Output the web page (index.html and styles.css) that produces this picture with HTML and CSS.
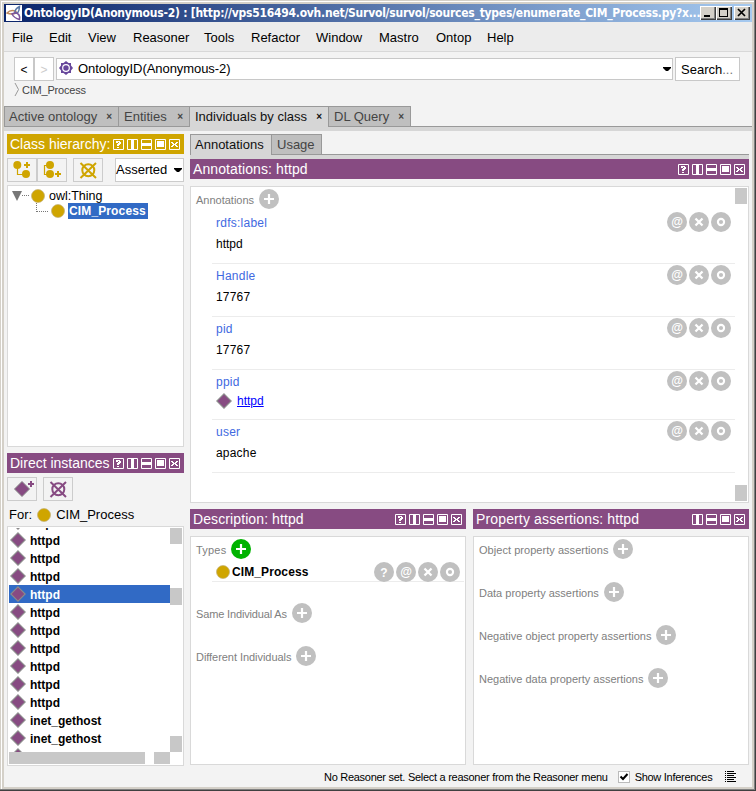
FILE: index.html
```html
<!DOCTYPE html>
<html lang="en">
<head>
<meta charset="utf-8">
<title>OntologyID(Anonymous-2)</title>
<link rel="stylesheet" href="styles.css">
</head>
<body>
<svg class="defs" width="0" height="0" aria-hidden="true">
  <symbol id="w-help" viewBox="0 0 11 11"><path d="M.5.5h10v10H.5z" fill="none" stroke="#fff"/><path d="M3 2h4v1h1v2H7v1H6v1H4V5h1V4h1V3H5v1H3zM4 8h2v1H4z" fill="#fff"/></symbol>
  <symbol id="w-cols" viewBox="0 0 11 11"><path d="M.5.5h10v10H.5z" fill="none" stroke="#fff"/><path d="M4 1h3v9H4z" fill="#fff"/></symbol>
  <symbol id="w-rows" viewBox="0 0 11 11"><path d="M.5.5h10v10H.5z" fill="none" stroke="#fff"/><path d="M1 4h9v3H1z" fill="#fff"/></symbol>
  <symbol id="w-max" viewBox="0 0 11 11"><path d="M.5.5h10v10H.5z" fill="none" stroke="#fff"/><path d="M2 2h7v6H2z" fill="#fff"/></symbol>
  <symbol id="w-close" viewBox="0 0 11 11"><path d="M.5.5h10v10H.5z" fill="none" stroke="#fff"/><path d="M2 3h2v1h1v1h1V4h1V3h2v1H8v1H7v1h1v1h1v1H7V7H6V6H5v1H4v1H2V7h1V6h1V5H3V4H2z" fill="#fff"/></symbol>
  <symbol id="c-add" viewBox="0 0 20 20"><circle cx="10" cy="10" r="10"/><path d="M10 5v10M5 10h10" stroke="#fff" stroke-width="2.2"/></symbol>
  <symbol id="c-x" viewBox="0 0 20 20"><circle cx="10" cy="10" r="10"/><path d="M6.5 6.5l7 7M13.5 6.5l-7 7" stroke="#fff" stroke-width="2.3"/></symbol>
  <symbol id="c-o" viewBox="0 0 20 20"><circle cx="10" cy="10" r="10"/><circle cx="10" cy="10" r="3.1" fill="none" stroke="#fff" stroke-width="2.1"/></symbol>
  <symbol id="diamond" viewBox="0 0 16 16"><path d="M8 .8L15.2 8 8 15.2.8 8z" fill="#874b82" stroke="#8b8b8b" stroke-width="1.1"/></symbol>
  <symbol id="ball" viewBox="0 0 14 14"><circle cx="7" cy="7" r="6.5" fill="#cfa500" stroke="#c3b077" stroke-width=".7"/></symbol>
</svg>

<div class="window">
  <div class="titlebar">
    <svg class="app-icon" viewBox="0 0 16 16"><path fill="#fff" d="M0 0h16v16H0z"/><g fill="none" stroke-width="1.5"><path d="M1 8Q5 4 10 6.500Q10 9 6 9Q3 9 1 8z" stroke="#c08a5c"/><path d="M13.500 1.500Q8.500 4 9 8Q13 9.500 13.500 1.500z" stroke="#5a78a6"/><path d="M6 9Q8 13 13.500 14.500Q14.500 9 9.500 7.500z" stroke="#7d559c"/></g></svg>
    <span class="title">OntologyID(Anonymous-2) : [http://vps516494.ovh.net/Survol/survol/sources_types/enumerate_CIM_Process.py?x...</span>
    <span class="wb"><svg viewBox="0 0 16 14"><path d="M4 9h6v2H4z"/></svg></span><span class="wb"><svg viewBox="0 0 16 14"><path d="M3 2h9v9H3zM4 4v6h7V4z" fill-rule="evenodd"/></svg></span><span class="wb last"><svg viewBox="0 0 16 14"><path d="M4 3l7 7M11 3l-7 7" stroke="#000" stroke-width="1.7"/></svg></span>
  </div>

  <div class="menubar">
    <span class="m1">File</span><span class="m2">Edit</span><span class="m3">View</span><span class="m4">Reasoner</span><span class="m5">Tools</span><span class="m6">Refactor</span><span class="m7">Window</span><span class="m8">Mastro</span><span class="m9">Ontop</span><span class="m10">Help</span>
  </div>

  <div class="navbar">
    <span class="nav">&lt;</span><span class="nav off">&gt;</span>
    <div class="address">
      <svg width="14" height="14" viewBox="0 0 14 14"><path d="M7 0l2.500 2H12v2.500L14 7l-2 2.500V12H9.500L7 14l-2.500-2H2V9.500L0 7l2-2.500V2h2.500z" fill="#67479b"/><circle cx="7" cy="7" r="3.300" fill="none" stroke="#fff" stroke-width="1.200"/></svg>
      <span class="grow">OntologyID(Anonymous-2)</span>
      <svg width="8" height="4" viewBox="0 0 8 4"><path d="M0 0h8v1L5 4H3L0 1z"/></svg>
    </div>
    <span class="search">Search<i>...</i></span>
  </div>
  <div class="crumb"><svg width="6" height="15" viewBox="0 0 6 15"><path d="M1 1l3.5 6.5L1 14" fill="none" stroke="#999"/></svg><span>CIM_Process</span></div>

  <div class="tabs">
    <div class="tab t1"><span>Active ontology</span><b>×</b></div><div class="tab t2"><span>Entities</span><b>×</b></div><div class="tab t3 on"><span>Individuals by class</span><b>×</b></div><div class="tab t4"><span>DL Query</span><b>×</b></div><div class="tabfill"></div>
  </div>
  <div class="strip"></div>

  <div class="work">
    <div class="left">
      <div class="head gold"><span class="h-class">Class hierarchy:</span><div class="wi"><svg><use href="#w-help"/></svg><svg><use href="#w-cols"/></svg><svg><use href="#w-rows"/></svg><svg><use href="#w-max"/></svg><svg><use href="#w-close"/></svg></div></div>
      <div class="tools">
        <span class="tool"><svg viewBox="0 0 28 22"><path d="M9.500 6v9.500h9" fill="none" stroke="#cfa500" stroke-width="1.2"/><circle cx="9.300" cy="6" r="4" fill="#cfa500"/><circle cx="18" cy="15" r="4" fill="#cfa500"/><path d="M19 3v6M16 6h6" stroke="#cfa500" stroke-width="2"/></svg></span>
        <span class="tool"><svg viewBox="0 0 28 22"><path d="M12 6.500H6.500v9h6" fill="none" stroke="#cfa500" stroke-width="1.2"/><circle cx="12" cy="6" r="4" fill="#cfa500"/><circle cx="12" cy="15" r="4" fill="#cfa500"/><path d="M20 12v6M17 15h6" stroke="#cfa500" stroke-width="2"/></svg></span>
        <span class="tool gap"><svg viewBox="0 0 28 22"><g fill="none" stroke="#cfa500" stroke-width="2"><circle cx="14.300" cy="11.300" r="6"/><path d="M6.500 4l15.500 15M22 4L6.500 19"/></g></svg></span>
        <span class="select">Asserted<svg width="8" height="4" viewBox="0 0 8 4"><path d="M0 0h8v1L5 4H3L0 1z"/></svg></span>
      </div>
      <div class="box tree">
        <div class="node"><svg class="arrow" width="20" height="10" viewBox="0 0 20 10"><path d="M0 0h10L5 10z" fill="#777"/><path d="M10 4.5h8" stroke="#777" stroke-dasharray="1 1"/></svg><svg class="ball"><use href="#ball"/></svg><span class="owl">owl:Thing</span></div>
        <div class="node child"><svg class="elbow" width="13" height="10" viewBox="0 0 13 10"><path d="M.5 0v9M1 8.5h12" fill="none" stroke="#777" stroke-dasharray="1 1"/></svg><svg class="ball"><use href="#ball"/></svg><b class="chosen">CIM_Process</b></div>
      </div>
      <div class="head second"><span class="h-direct">Direct instances</span><div class="wi"><svg><use href="#w-help"/></svg><svg><use href="#w-cols"/></svg><svg><use href="#w-rows"/></svg><svg><use href="#w-max"/></svg><svg><use href="#w-close"/></svg></div></div>
      <div class="tools">
        <span class="tool"><svg viewBox="0 0 28 22"><path d="M14 3.500l7.500 7.500-7.500 7.500L6.500 11z" fill="#874b82" stroke="#888"/><path d="M23 3v6M20 6h6" stroke="#874b82" stroke-width="2"/></svg></span>
        <span class="tool gap"><svg viewBox="0 0 28 22"><g fill="none" stroke="#874b82" stroke-width="2"><circle cx="14.300" cy="11.300" r="6"/><path d="M6.500 4l15.500 15M22 4L6.500 19"/></g></svg></span>
      </div>
      <div class="for"><span>For:</span><svg class="ball"><use href="#ball"/></svg><span class="forname">CIM_Process</span></div>
      <div class="box list">
        <div class="listmain">
          <div class="rows">
            <div><svg><use href="#diamond"/></svg>httpd</div>
            <div><svg><use href="#diamond"/></svg>httpd</div>
            <div><svg><use href="#diamond"/></svg>httpd</div>
            <div><svg><use href="#diamond"/></svg>httpd</div>
            <div class="sel"><svg><use href="#diamond"/></svg>httpd</div>
            <div><svg><use href="#diamond"/></svg>httpd</div>
            <div><svg><use href="#diamond"/></svg>httpd</div>
            <div><svg><use href="#diamond"/></svg>httpd</div>
            <div><svg><use href="#diamond"/></svg>httpd</div>
            <div><svg><use href="#diamond"/></svg>httpd</div>
            <div><svg><use href="#diamond"/></svg>httpd</div>
            <div class="inet"><svg><use href="#diamond"/></svg>inet_gethost</div>
            <div class="inet"><svg><use href="#diamond"/></svg>inet_gethost</div>
            <div><svg><use href="#diamond"/></svg></div>
          </div>
          <div class="vbar"><i></i><i class="thumb"></i><i></i></div>
        </div>
        <div class="hbar"><i class="hthumb"></i><i></i></div>
      </div>
    </div>

    <div class="right">
      <div class="subtabs"><div class="tab s1 on"><span>Annotations</span></div><div class="tab s2"><span>Usage</span></div><div class="tabfill"></div></div>
      <div class="substrip"></div>
      <div class="head"><span class="h-ann">Annotations: httpd</span><div class="wi"><svg><use href="#w-help"/></svg><svg><use href="#w-cols"/></svg><svg><use href="#w-rows"/></svg><svg><use href="#w-max"/></svg><svg><use href="#w-close"/></svg></div></div>
      <div class="box ann">
        <div class="annmain">
          <div class="sec"><span class="l-ann">Annotations</span><svg class="c"><use href="#c-add"/></svg></div>
          <div class="row"><div><p class="key">rdfs:label</p><p>httpd</p></div><div class="acts"><span class="at">@</span><svg class="c"><use href="#c-x"/></svg><svg class="c"><use href="#c-o"/></svg></div></div>
          <div class="row"><div><p class="key">Handle</p><p class="num">17767</p></div><div class="acts"><span class="at">@</span><svg class="c"><use href="#c-x"/></svg><svg class="c"><use href="#c-o"/></svg></div></div>
          <div class="row"><div><p class="key">pid</p><p class="num">17767</p></div><div class="acts"><span class="at">@</span><svg class="c"><use href="#c-x"/></svg><svg class="c"><use href="#c-o"/></svg></div></div>
          <div class="row short"><div><p class="key">ppid</p><p class="ref"><svg><use href="#diamond"/></svg><a>httpd</a></p></div><div class="acts"><span class="at">@</span><svg class="c"><use href="#c-x"/></svg><svg class="c"><use href="#c-o"/></svg></div></div>
          <div class="row"><div><p class="key">user</p><p class="num">apache</p></div><div class="acts"><span class="at">@</span><svg class="c"><use href="#c-x"/></svg><svg class="c"><use href="#c-o"/></svg></div></div>
        </div>
        <div class="vbar"><i></i><i></i></div>
      </div>
      <div class="pair">
        <div class="half">
          <div class="head"><span class="h-desc">Description: httpd</span><div class="wi"><svg><use href="#w-help"/></svg><svg><use href="#w-cols"/></svg><svg><use href="#w-rows"/></svg><svg><use href="#w-max"/></svg><svg><use href="#w-close"/></svg></div></div>
          <div class="box lower">
            <div class="sec"><span class="l-types">Types</span><svg class="c green"><use href="#c-add"/></svg></div>
            <div class="type"><svg class="ball"><use href="#ball"/></svg><b>CIM_Process</b><div class="acts"><span class="at q">?</span><span class="at">@</span><svg class="c"><use href="#c-x"/></svg><svg class="c"><use href="#c-o"/></svg></div></div>
            <div class="sec same"><span class="l-same">Same Individual As</span><svg class="c"><use href="#c-add"/></svg></div>
            <div class="sec"><span class="l-diff">Different Individuals</span><svg class="c"><use href="#c-add"/></svg></div>
          </div>
        </div>
        <div class="half">
          <div class="head"><span class="h-prop">Property assertions: httpd</span><div class="wi"><svg><use href="#w-cols"/></svg><svg><use href="#w-rows"/></svg><svg><use href="#w-max"/></svg><svg><use href="#w-close"/></svg></div></div>
          <div class="box lower">
            <div class="sec"><span class="p1">Object property assertions</span><svg class="c"><use href="#c-add"/></svg></div>
            <div class="sec"><span class="p2">Data property assertions</span><svg class="c"><use href="#c-add"/></svg></div>
            <div class="sec"><span class="p3">Negative object property assertions</span><svg class="c"><use href="#c-add"/></svg></div>
            <div class="sec"><span class="p4">Negative data property assertions</span><svg class="c"><use href="#c-add"/></svg></div>
          </div>
        </div>
      </div>
    </div>
  </div>

  <div class="status">
    <span class="st1">No Reasoner set. Select a reasoner from the Reasoner menu</span>
    <span class="check"><svg viewBox="0 0 10 10"><path d="M1.5 4.5L4 7l4.5-5" fill="none" stroke="#000" stroke-width="2"/></svg></span>
    <span class="st2">Show Inferences</span>
    <svg class="log" width="11" height="12" viewBox="0 0 11 12"><path d="M0 .5h1M2 .5h7M0 2.5h1M2 2.5h9M0 4.5h1M2 4.5h7M0 6.5h1M2 6.5h9M0 8.5h1M2 8.5h7M0 10.5h1M2 10.5h9" stroke="#000"/></svg>
  </div>
</div>
</body>
</html>
```
FILE: styles.css
```css
* { box-sizing: border-box; }
body { margin: 0; font: 13px/16px "Liberation Sans", Arial, sans-serif; color: #000; }
p { margin: 0; }
svg { display: block; flex: none; }
span, b, a { white-space: nowrap; }
.defs { position: absolute; }

.window {
  width: 756px; height: 791px; overflow: hidden; padding: 4px;
  display: flex; flex-direction: column;
  background: linear-gradient(#f3f3f3, #f3f3f3) content-box,
    linear-gradient(#404040, #404040) right / 1px 100% no-repeat,
    linear-gradient(#404040, #404040) bottom / 100% 1px no-repeat,
    linear-gradient(#808080, #808080) 754px 0 / 1px 790px no-repeat,
    linear-gradient(#808080, #808080) 0 789px / 755px 1px no-repeat,
    linear-gradient(#fff, #fff) 1px 1px / 753px 1px no-repeat,
    linear-gradient(#fff, #fff) 1px 1px / 1px 788px no-repeat,
    #d4d0c8;
  background-origin: content-box, border-box, border-box, border-box, border-box, border-box, border-box, border-box;
}

.titlebar { height: 18px; flex: none; display: flex; align-items: center; background: linear-gradient(90deg, #0a246a, #a6caf0); padding: 0 2px; }
.app-icon { width: 16px; height: 16px; margin-right: 2px; }
.title { width: 676px; flex: none; font: bold 12px/16px "DejaVu Sans Condensed", "DejaVu Sans", sans-serif; letter-spacing: -.24px; color: #fff; }
.wb { width: 16px; height: 14px; flex: none; background: #d4d0c8; box-shadow: inset 1px 1px #fff, inset -1px -1px #404040, inset -2px -2px #808080; }
.wb svg { width: 16px; height: 14px; }
.wb.last { margin-left: 2px; }

.menubar { height: 30px; flex: none; background: #ececec; border-bottom: 1px solid #d8d8d8; display: flex; align-items: center; padding: 2px 0 0 8px; }
.menubar span { flex: none; }
.m1 { width: 37px; } .m2 { width: 39px; } .m3 { width: 45px; } .m4 { width: 71px; } .m5 { width: 47px; } .m6 { width: 65px; } .m7 { width: 63px; } .m8 { width: 57px; } .m9 { width: 51px; }

.navbar { height: 29px; flex: none; margin-top: 5px; padding-left: 10px; display: flex; align-items: flex-start; }
.nav { width: 20px; height: 24px; border: 1px solid #c8c8c8; background: #fff; text-align: center; line-height: 24px; font-size: 12px; }
.nav.off { color: #ccc; }
.address { width: 617px; height: 22px; margin: 1px 2px 0; border: 1px solid #c8c8c8; background: #fff; display: flex; align-items: center; padding: 0 1px 0 2px; }
.address svg:first-child { margin: -2px 5px 0 0; }
.grow { flex: 1; letter-spacing: -.06px; }
.search { width: 65px; height: 24px; border: 1px solid #c8c8c8; background: #fff; line-height: 24px; padding-left: 5px; }
.search i { font-style: normal; color: #777; }
.crumb { height: 24px; flex: none; display: flex; padding-left: 10px; font-size: 11px; color: #444; line-height: 15px; margin-top: -4px; }
.crumb span { margin-left: 2px; line-height: 16px; letter-spacing: -.2px; }

.tabs { height: 21px; flex: none; display: flex; }
.tab { height: 21px; border: 1px solid #999; border-right-width: 0; background: #bfbfbf; display: flex; align-items: center; justify-content: space-between; color: #444; padding: 0 6px 0 4px; }
.tab b { font-size: 10px; }
.tab.on { background: #d6d6d6; border-bottom: 0; color: #111; }
.t1 { width: 114px; } .t2 { width: 71px; padding-left: 5px; } .t3 { width: 139px; padding-left: 5px; } .t4 { width: 83px; border-right-width: 1px; padding-left: 5px; }
.tabfill { flex: 1; border-bottom: 1px solid #999; }
.strip { height: 4px; flex: none; background: #d6d6d6; }

.work { display: flex; gap: 6px; padding: 3px 3px 0; flex: none; height: 635px; }
.left { width: 177px; }
.right { width: 559px; }
.head { height: 20px; background: #874b82; color: #fff; font-size: 14px; line-height: 20px; display: flex; justify-content: space-between; padding: 0 4px 0 3px; }
.head.gold { background: #cfa500; }
.head.second { margin-top: 6px; }
.h-ann, .h-desc { letter-spacing: .1px; }
.h-prop { letter-spacing: .14px; }
.wi { display: flex; gap: 3px; padding-top: 5px; flex: none; }
.wi svg { width: 11px; height: 11px; }
.tools { display: flex; height: 24px; margin-top: 4px; }
.tool { width: 30px; height: 24px; border: 1px solid #ccc; }
.tool svg { width: 28px; height: 22px; }
.tool.gap { margin-left: 6px; }
.select { margin-left: auto; width: 69px; border: 1px solid #ccc; background: #fff; display: flex; align-items: center; justify-content: space-between; padding-right: 1px; }
.box { border: 1px solid #d9d9d9; background: #fff; }
.tree { height: 262px; margin-top: 3px; padding-top: 2px; }
.node { display: flex; align-items: center; height: 16px; }
.node .arrow { margin: 0 0 0 4px; }
.ball { width: 14px; height: 14px; }
.node .ball { margin-right: 4px; margin-left: -1px; }
.owl { font-size: 12.5px; }
.child { margin-top: -1px; }
.child .elbow { margin: -6px 3px 0 28px; }
.child .ball { margin-right: 3px; }
.chosen { background: #316ac5; color: #fff; width: 80px; padding-left: 1px; font-size: 12px; letter-spacing: .13px; }
.for { height: 25px; display: flex; align-items: center; padding: 3px 0 0 2px; }
.for .ball { margin: 0 5px; }
.list { height: 240px; padding: 1px; }
.listmain { display: flex; height: 224px; overflow: hidden; }
.rows { width: 161px; margin-top: -15px; font-weight: bold; font-size: 12px; }
.rows div { height: 18px; display: flex; align-items: center; padding: 2px 0 0 1px; line-height: 16px; }
.rows svg { width: 16px; height: 16px; margin: -2px 4px 0 0; }
.rows .sel { background: #316ac5; color: #fff; }
.vbar { width: 12px; display: flex; flex-direction: column; justify-content: space-between; }
.vbar i { height: 16px; background: #c8c8c8; }
.vbar i.thumb { height: 17px; margin-bottom: 87px; }
.hbar { display: flex; height: 12px; width: 161px; justify-content: space-between; }
.hbar i { width: 16px; background: #c8c8c8; }
.hbar .hthumb { width: 136px; }

.subtabs { display: flex; height: 21px; }
.s1 { width: 81px; } .s2 { width: 51px; border-right-width: 1px; padding-left: 5px; }
.substrip { height: 4px; background: #d6d6d6; }
.ann { height: 317px; margin-top: 7px; padding: 1px; display: flex; }
.annmain { width: 544px; }
.sec { height: 43px; display: flex; align-items: flex-start; font-size: 11px; color: #808080; padding: 2px 0 0 5px; }
.sec span { line-height: 23px; flex: none; }
.annmain .sec { height: 23px; padding: 1px 0 0 4px; }
.l-types { letter-spacing: .2px; }
.l-same { letter-spacing: -.15px; }
.l-diff { letter-spacing: -.05px; }
.p1 { letter-spacing: .04px; }
.c { width: 20px; height: 20px; fill: #c0c0c0; }
.c.green { fill: #00b300; }
.sec .c { margin-left: 5px; }
.row { height: 53px; margin-left: 20px; padding-left: 4px; border-bottom: 1px solid #ececec; display: flex; justify-content: space-between; font-size: 12px; }
.row.short { height: 50px; }
.row p { height: 21px; line-height: 22px; }
.row p.key { color: #4169e1; height: 22px; padding-top: 1px; letter-spacing: .25px; }
.row .num { letter-spacing: .2px; }
.row .ref { display: flex; align-items: center; height: 17px; }
.ref svg { width: 16px; height: 16px; margin-right: 5px; }
.ref a { color: #00f; text-decoration: underline; line-height: 18px; padding-top: 1px; }
.acts { display: flex; gap: 2px; padding: 1px 4px 0 0; }
.at { width: 20px; height: 20px; border-radius: 50%; background: #c0c0c0; color: #fff; font: bold 12px/20px "Liberation Sans", sans-serif; text-align: center; }
.at.q { line-height: 22px; }
.pair { display: flex; gap: 7px; margin-top: 6px; }
.half { width: 276px; }
.lower { height: 229px; margin-top: 7px; }
.lower > .sec:first-child + .type { margin-top: -18px; }
.type { height: 20px; margin-left: 21px; padding-left: 4px; border-bottom: 1px solid #ececec; display: flex; align-items: center; font-size: 12px; margin-right: 1px; }
.type b { margin-left: 2px; flex: 1; letter-spacing: .1px; }
.same { margin-top: 19px; }

.status { flex: none; height: 22px; display: flex; align-items: center; font-size: 11px; padding-left: 320px; }
.st1, .st2 { letter-spacing: -.28px; }
.check { width: 12px; height: 12px; border: 1px solid #bbb; background: #fff; margin: 0 5px 0 10px; }
.check svg { width: 10px; height: 10px; }
.log { margin-left: 13px; }
```
